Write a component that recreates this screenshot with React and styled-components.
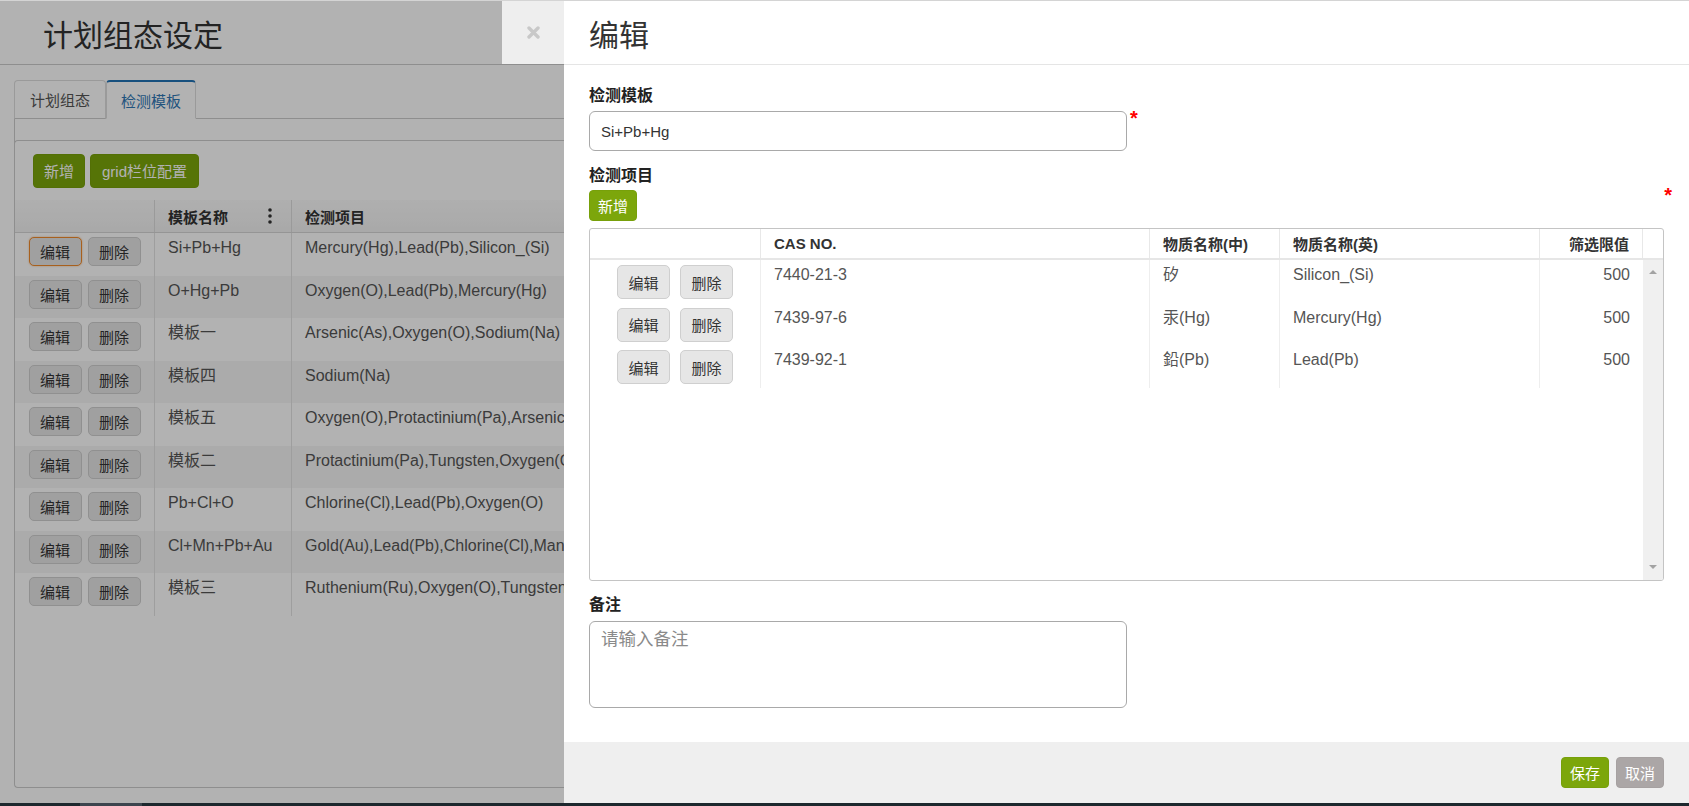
import React from "react";
import styled, { createGlobalStyle, css } from "styled-components";

const GlobalStyle = createGlobalStyle`
  html, body {
    margin: 0;
    padding: 0;
  }
  body {
    font-family: "Liberation Sans", "Noto Sans CJK SC", sans-serif;
    background: #1d282e;
    overflow: hidden;
  }
  * {
    box-sizing: border-box;
  }
`;

const Root = styled.div`
  width: 1689px;
  height: 806px;
  display: flex;
  flex-direction: column;
`;

const Screen = styled.div`
  position: relative;
  height: 803px;
  flex: none;
  border-top: 1px solid #d4d4d4;
  background: #fff;
  overflow: hidden;
`;

const Taskbar = styled.div`
  height: 3px;
  background: #1d282e;
  display: flex;
`;

const TaskItem = styled.div`
  margin-left: 80px;
  width: 62px;
  background: #3c454e;
`;

/* ---------- page under the drawer ---------- */

const Page = styled.div`
  height: 100%;
  display: flex;
  flex-direction: column;
  color: #333;
`;

const PageHeader = styled.div`
  height: 64px;
  flex: none;
  display: flex;
  align-items: center;
  padding-left: 43px;
  border-bottom: 1px solid #ccc;
  font-size: 30px;
  color: #333;
`;

const PageBody = styled.div`
  flex: 1;
  min-height: 0;
  display: flex;
  flex-direction: column;
  padding: 15px 0 15px 14px;
`;

const TabBar = styled.div`
  display: flex;
  flex: none;
  border-bottom: 1px solid #ccc;
`;

const Tab = styled.div`
  height: 39px;
  margin-bottom: -1px;
  padding: 0 15px;
  display: flex;
  align-items: center;
  font-size: 15px;
  color: #555;
  background: #fff;
  border: 1px solid #ddd;
  border-bottom-color: #ccc;
  border-radius: 4px 4px 0 0;
  ${p =>
    p.$active &&
    css`
      padding: 0 14px;
      color: #2f77b5;
      border-top: 2px solid #2273b5;
      border-bottom-color: #fff;
    `}
`;

const TabPane = styled.div`
  flex: 1;
  display: flex;
  flex-direction: column;
  padding-top: 21px;
  border-left: 1px solid #ccc;
  border-bottom: 1px solid #ccc;
  border-bottom-left-radius: 4px;
`;

const GridBox = styled.div`
  margin-left: -1px;
  border-top: 1px solid #ccc;
  border-left: 1px solid #ccc;
  border-top-left-radius: 4px;
`;

const Toolbar = styled.div`
  height: 59px;
  display: flex;
  align-items: center;
  gap: 5px;
  padding-left: 18px;
`;

const Button = styled.button`
  height: ${p => p.$h || 31}px;
  min-width: ${p => p.$w || 0}px;
  padding: 0 ${p => p.$px ?? 8}px;
  font-family: inherit;
  font-size: 15px;
  border-radius: 4px;
  display: inline-flex;
  align-items: center;
  justify-content: center;
  cursor: pointer;
  ${p =>
    p.$variant === "green" &&
    css`
      background: #7ca60b;
      color: #fff;
      border: 1px solid #77a00a;
    `}
  ${p =>
    p.$variant === "gray" &&
    css`
      background: #aba6a6;
      color: #fff;
      border: 1px solid #a6a1a1;
    `}
  ${p =>
    p.$variant === "light" &&
    css`
      background: #e6e6e6;
      color: #333;
      border: 1px solid #cfcfcf;
      border-radius: 5px;
    `}
  ${p =>
    p.$focus &&
    css`
      border-color: #f08a2c;
      box-shadow: 0 0 2px rgba(240, 138, 44, 0.6);
    `}
`;

const PlanHead = styled.div`
  display: grid;
  grid-template-columns: 140px 137px 1fr;
  height: 33px;
  background: linear-gradient(#fbfbfb, #f2f2f2);
  border-bottom: 1px solid #d6d6d6;
`;

const PlanHeadCell = styled.div`
  display: flex;
  align-items: center;
  justify-content: space-between;
  padding: 0 19px 0 13px;
  font-size: 15px;
  font-weight: bold;
  color: #333;
  border-right: 1px solid #ddd;
  white-space: nowrap;
`;

const PlanRow = styled.div`
  display: grid;
  grid-template-columns: 140px 137px 1fr;
  height: 42.5px;
  background: ${p => (p.$odd ? "#f5f5f5" : "#fff")};
`;

const PlanCell = styled.div`
  padding: 6px 13px 0;
  font-size: 16px;
  line-height: 18px;
  color: #555;
  white-space: nowrap;
  overflow: hidden;
  border-right: 1px solid #e2e2e2;
`;

const ActionCell = styled.div`
  display: flex;
  justify-content: center;
  align-items: flex-start;
  gap: ${p => p.$gap}px;
  padding-top: ${p => p.$top}px;
  border-right: 1px solid ${p => p.$line};
`;

/* ---------- overlay + drawer ---------- */

const Backdrop = styled.div`
  position: absolute;
  inset: 0;
  background: rgba(0, 0, 0, 0.3);
  z-index: 1;
`;

const Drawer = styled.aside`
  position: absolute;
  top: 0;
  right: 0;
  bottom: 0;
  width: 1125px;
  background: #fff;
  display: flex;
  flex-direction: column;
  z-index: 2;
`;

const CloseTab = styled.button`
  position: absolute;
  top: 0;
  left: -62px;
  width: 62px;
  height: 63px;
  padding: 0;
  border: none;
  background: #eee;
  display: flex;
  align-items: center;
  justify-content: center;
  cursor: pointer;
`;

const DrawerHeader = styled.div`
  height: 64px;
  flex: none;
  display: flex;
  align-items: center;
  padding-left: 25px;
  border-bottom: 1px solid #e5e5e5;
  font-size: 30px;
  color: #333;
`;

const DrawerBody = styled.div`
  flex: 1;
  display: flex;
  flex-direction: column;
  padding: 21px 25px 0;
`;

const Label = styled.div`
  font-size: 16px;
  line-height: 20px;
  font-weight: bold;
  color: #222;
  margin-top: ${p => p.$mt || 0}px;
`;

const FieldRow = styled.div`
  display: flex;
  align-items: flex-start;
  margin-top: ${p => p.$mt || 0}px;
`;

const Required = styled.span`
  color: #f00;
  font-size: 20px;
  font-weight: bold;
  line-height: 20px;
  margin: -3px 0 0 3px;
`;

const Input = styled.input`
  width: 538px;
  height: 40px;
  padding: 0 11px;
  border: 1px solid #a9a9a9;
  border-radius: 6px;
  font-family: inherit;
  font-size: 15px;
  color: #333;
  outline: none;
`;

const TextArea = styled.textarea`
  width: 538px;
  height: 87px;
  padding: 6px 11px;
  border: 1px solid #a9a9a9;
  border-radius: 6px;
  font-family: inherit;
  font-size: 17.5px;
  line-height: 1.3;
  resize: none;
  outline: none;
  margin-top: 6px;
  &::placeholder {
    color: #8a8a8a;
  }
`;

const ItemTools = styled.div`
  position: relative;
  display: flex;
  margin-top: 4px;
`;

const CornerMark = styled(Required)`
  position: absolute;
  right: -8px;
  top: -5px;
  margin: 0;
`;

const ItemGrid = styled.div`
  height: 353px;
  margin-top: 7px;
  border: 1px solid #c4c4c4;
  border-radius: 3px;
  display: flex;
  flex-direction: column;
  overflow: hidden;
`;

const ItemHead = styled.div`
  display: grid;
  grid-template-columns: 171px 389px 130px 260px 103px 20px;
  height: 31px;
  flex: none;
  border-bottom: 2px solid #e6e6e6;
`;

const ItemHeadCell = styled.div`
  display: flex;
  align-items: center;
  justify-content: ${p => (p.$right ? "flex-end" : "flex-start")};
  padding: 0 13px;
  font-size: 15px;
  font-weight: bold;
  color: #333;
  border-right: ${p => (p.$last ? "none" : "1px solid #e8e8e8")};
  white-space: nowrap;
`;

const ItemBody = styled.div`
  flex: 1;
  display: flex;
`;

const ItemRows = styled.div`
  flex: 1;
`;

const ItemRow = styled.div`
  display: grid;
  grid-template-columns: 171px 389px 130px 260px 103px;
  height: 42.5px;
`;

const ItemCell = styled.div`
  padding: 6px 13px 0;
  font-size: 16px;
  line-height: 18px;
  color: #555;
  text-align: ${p => (p.$right ? "right" : "left")};
  border-right: ${p => (p.$last ? "none" : "1px solid #eee")};
  white-space: nowrap;
`;

const ScrollTrack = styled.div`
  width: 20px;
  background: #f0f0f0;
  display: flex;
  flex-direction: column;
  justify-content: space-between;
  align-items: center;
  padding: 10px 0 11px;
`;

const Arrow = styled.div`
  width: 0;
  height: 0;
  border-left: 4px solid transparent;
  border-right: 4px solid transparent;
  ${p =>
    p.$down
      ? css`
          border-top: 4px solid #a3a3a3;
        `
      : css`
          border-bottom: 4px solid #a3a3a3;
        `}
`;

const Footer = styled.div`
  height: 61px;
  flex: none;
  background: #efefef;
  display: flex;
  justify-content: flex-end;
  align-items: center;
  gap: 7px;
  padding-right: 25px;
`;

const plans = [
  ["Si+Pb+Hg", "Mercury(Hg),Lead(Pb),Silicon_(Si)"],
  ["O+Hg+Pb", "Oxygen(O),Lead(Pb),Mercury(Hg)"],
  ["模板一", "Arsenic(As),Oxygen(O),Sodium(Na)"],
  ["模板四", "Sodium(Na)"],
  ["模板五", "Oxygen(O),Protactinium(Pa),Arsenic(As)"],
  ["模板二", "Protactinium(Pa),Tungsten,Oxygen(O)"],
  ["Pb+Cl+O", "Chlorine(Cl),Lead(Pb),Oxygen(O)"],
  ["Cl+Mn+Pb+Au", "Gold(Au),Lead(Pb),Chlorine(Cl),Manganese(Mn)"],
  ["模板三", "Ruthenium(Ru),Oxygen(O),Tungsten"]
];

const items = [
  { cas: "7440-21-3", zh: "矽", en: "Silicon_(Si)", limit: 500 },
  { cas: "7439-97-6", zh: "汞(Hg)", en: "Mercury(Hg)", limit: 500 },
  { cas: "7439-92-1", zh: "鉛(Pb)", en: "Lead(Pb)", limit: 500 }
];

const Kebab = () => (
  <svg width="4" height="16" viewBox="0 0 4 16">
    <circle cx="2" cy="2" r="1.8" fill="#333" />
    <circle cx="2" cy="8" r="1.8" fill="#333" />
    <circle cx="2" cy="14" r="1.8" fill="#333" />
  </svg>
);

const CloseIcon = () => (
  <svg width="13" height="13" viewBox="0 0 13 13">
    <path
      d="M2 2 L11 11 M11 2 L2 11"
      stroke="#c8c8c8"
      strokeWidth="3.4"
      strokeLinecap="round"
    />
  </svg>
);

const PlanPage = () => (
  <Page>
    <PageHeader>计划组态设定</PageHeader>
    <PageBody>
      <TabBar>
        <Tab>计划组态</Tab>
        <Tab $active>检测模板</Tab>
      </TabBar>
      <TabPane>
        <GridBox>
          <Toolbar>
            <Button $variant="green" $h={34} $px={10}>
              新增
            </Button>
            <Button $variant="green" $h={34} $px={11}>
              grid栏位配置
            </Button>
          </Toolbar>
          <PlanHead>
            <PlanHeadCell />
            <PlanHeadCell>
              模板名称
              <Kebab />
            </PlanHeadCell>
            <PlanHeadCell>检测项目</PlanHeadCell>
          </PlanHead>
          {plans.map(([name, list], i) => (
            <PlanRow key={name} $odd={i % 2 === 1}>
              <ActionCell $gap={6} $top={4} $line="#e2e2e2">
                <Button $variant="light" $h={29} $w={53} $px={0} $focus={i === 0}>
                  编辑
                </Button>
                <Button $variant="light" $h={29} $w={53} $px={0}>
                  删除
                </Button>
              </ActionCell>
              <PlanCell>{name}</PlanCell>
              <PlanCell>{list}</PlanCell>
            </PlanRow>
          ))}
        </GridBox>
      </TabPane>
    </PageBody>
  </Page>
);

const EditDrawer = () => (
  <Drawer>
    <CloseTab aria-label="close">
      <CloseIcon />
    </CloseTab>
    <DrawerHeader>编辑</DrawerHeader>
    <DrawerBody>
      <Label>检测模板</Label>
      <FieldRow $mt={5}>
        <Input defaultValue="Si+Pb+Hg" />
        <Required>*</Required>
      </FieldRow>
      <Label $mt={15}>检测项目</Label>
      <ItemTools>
        <Button $variant="green">新增</Button>
        <CornerMark>*</CornerMark>
      </ItemTools>
      <ItemGrid>
        <ItemHead>
          <ItemHeadCell />
          <ItemHeadCell>CAS NO.</ItemHeadCell>
          <ItemHeadCell>物质名称(中)</ItemHeadCell>
          <ItemHeadCell>物质名称(英)</ItemHeadCell>
          <ItemHeadCell $right>筛选限值</ItemHeadCell>
          <ItemHeadCell $last />
        </ItemHead>
        <ItemBody>
          <ItemRows>
            {items.map(item => (
              <ItemRow key={item.cas}>
                <ActionCell $gap={10} $top={5} $line="#eee">
                  <Button $variant="light" $h={34} $w={53} $px={0}>
                    编辑
                  </Button>
                  <Button $variant="light" $h={34} $w={53} $px={0}>
                    删除
                  </Button>
                </ActionCell>
                <ItemCell>{item.cas}</ItemCell>
                <ItemCell>{item.zh}</ItemCell>
                <ItemCell>{item.en}</ItemCell>
                <ItemCell $right $last>
                  {item.limit}
                </ItemCell>
              </ItemRow>
            ))}
          </ItemRows>
          <ScrollTrack>
            <Arrow />
            <Arrow $down />
          </ScrollTrack>
        </ItemBody>
      </ItemGrid>
      <Label $mt={14}>备注</Label>
      <TextArea placeholder="请输入备注" />
    </DrawerBody>
    <Footer>
      <Button $variant="green">保存</Button>
      <Button $variant="gray">取消</Button>
    </Footer>
  </Drawer>
);

export default function App() {
  return (
    <Root>
      <GlobalStyle />
      <Screen>
        <PlanPage />
        <Backdrop />
        <EditDrawer />
      </Screen>
      <Taskbar>
        <TaskItem />
      </Taskbar>
    </Root>
  );
}
